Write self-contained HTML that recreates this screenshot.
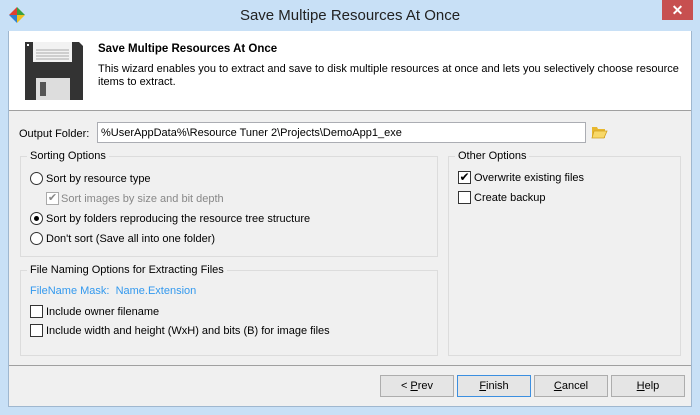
<!DOCTYPE html>
<html><head><style>
*{box-sizing:border-box;margin:0;padding:0}
body{width:700px;height:415px;background:#c8e0f6;font-family:"Liberation Sans",sans-serif;font-size:11px;color:#000;position:relative;overflow:hidden}
.a{position:absolute}
.title{left:0;top:7px;width:700px;text-align:center;font-size:15px;color:#222}
.close{left:662px;top:0;width:31px;height:20px;background:#c75050;color:#fff;text-align:center;font-size:14px;line-height:20px;font-weight:bold}
.client{left:8px;top:31px;width:684px;height:376px;background:#f0f0f0;border:1px solid #9fb7cf;border-top:none}
.hdr{left:9px;top:31px;width:682px;height:80px;background:#fff;border-bottom:1px solid #a0a0a0}
.grp{border:1px solid #dcdcdc}
.lg{background:#f0f0f0;padding:0 3px}
.rb{width:13px;height:13px;border:1px solid #333;border-radius:50%;background:#fff}
.cb{width:13px;height:13px;border:1px solid #333;background:#fff}
.btn{height:22px;border:1px solid #adadad;background:#e5e5e5;text-align:center;line-height:20px;width:74px}
.t{margin-top:1px}
</style></head><body>
<svg class="a" style="left:8px;top:6px" width="18" height="18" viewBox="0 0 18 18"><path d="M9 1 L9 9 L1 9 Z" fill="#e04030"/><path d="M9 1 L17 9 L9 9 Z" fill="#3aa040"/><path d="M1 9 L9 9 L9 17 Z" fill="#2f7fd0"/><path d="M9 9 L17 9 L9 17 Z" fill="#f0c020"/></svg>
<div class="a title">Save Multipe Resources At Once</div>
<div class="a close">✕</div>
<div class="a client"></div>
<div class="a hdr"></div>
<svg class="a" style="left:24px;top:41px" width="60" height="60" viewBox="0 0 60 60"><path d="M1 1 H55 L59 5 V59 H1 Z" fill="#333"/><rect x="9" y="1" width="39" height="20" fill="#f2f2f2"/><g stroke="#aaa"><line x1="12" y1="9" x2="45" y2="9"/><line x1="12" y1="12" x2="45" y2="12"/><line x1="12" y1="15" x2="45" y2="15"/><line x1="12" y1="18" x2="45" y2="18"/></g><rect x="12" y="37" width="34" height="22" fill="#ddd"/><rect x="16" y="41" width="6" height="14" fill="#555"/><rect x="3" y="3" width="2" height="2" fill="#fff"/></svg>
<div class="a" style="left:98px;top:43px;font-weight:bold;font-size:11.5px">Save Multipe Resources At Once</div>
<div class="a" style="left:98px;top:63px;width:585px;line-height:13px">This wizard enables you to extract and save to disk multiple resources at once and lets you selectively choose resource items to extract.</div>
<div class="a" style="left:19px;top:128px">Output Folder:</div>
<div class="a" style="left:97px;top:122px;width:489px;height:21px;background:#fff;border:1px solid #abadb3;padding:4px 3px">%UserAppData%\Resource Tuner 2\Projects\DemoApp1_exe</div>
<svg class="a" style="left:591px;top:125px" width="17" height="15" viewBox="0 0 17 15"><path d="M1 2 H6 L7 4 H14 V13 H1 Z" fill="#e8b830"/><path d="M3 6 H16 L13 13 H1 Z" fill="#f8d868" stroke="#d0a020" stroke-width=".8"/></svg>
<div class="a grp" style="left:20px;top:156px;width:418px;height:101px"></div>
<div class="a lg" style="left:27px;top:150px">Sorting Options</div>
<div class="a rb" style="left:30px;top:172px"></div><div class="a" style="left:46px;top:173px">Sort by resource type</div>
<div class="a cb" style="left:46px;top:192px;border-color:#aaa;color:#888;font-size:11px;line-height:11px;text-align:center">✔</div><div class="a" style="left:61px;top:193px;color:#888">Sort images by size and bit depth</div>
<div class="a rb" style="left:30px;top:212px"><div class="a" style="left:3px;top:3px;width:5px;height:5px;border-radius:50%;background:#000"></div></div><div class="a" style="left:46px;top:213px">Sort by folders reproducing the resource tree structure</div>
<div class="a rb" style="left:30px;top:232px"></div><div class="a" style="left:46px;top:233px">Don't sort (Save all into one folder)</div>
<div class="a grp" style="left:20px;top:270px;width:418px;height:86px"></div>
<div class="a lg" style="left:27px;top:264px">File Naming Options for Extracting Files</div>
<div class="a" style="left:30px;top:285px;color:#3399ee">FileName Mask:&nbsp; Name.Extension</div>
<div class="a cb" style="left:30px;top:305px"></div><div class="a" style="left:46px;top:306px">Include owner filename</div>
<div class="a cb" style="left:30px;top:324px"></div><div class="a" style="left:46px;top:325px">Include width and height (WxH) and bits (B) for image files</div>
<div class="a grp" style="left:448px;top:156px;width:233px;height:200px"></div>
<div class="a lg" style="left:455px;top:150px">Other Options</div>
<div class="a cb" style="left:458px;top:171px;font-size:12px;line-height:11px;text-align:center">✔</div><div class="a" style="left:474px;top:172px">Overwrite existing files</div>
<div class="a cb" style="left:458px;top:191px"></div><div class="a" style="left:474px;top:192px">Create backup</div>
<div class="a" style="left:9px;top:365px;width:682px;height:1px;background:#a0a0a0"></div>
<div class="a btn" style="left:380px;top:375px">&lt; <u>P</u>rev</div>
<div class="a btn" style="left:457px;top:375px;border-color:#3c8fe0"><u>F</u>inish</div>
<div class="a btn" style="left:534px;top:375px"><u>C</u>ancel</div>
<div class="a btn" style="left:611px;top:375px"><u>H</u>elp</div>
</body></html>
